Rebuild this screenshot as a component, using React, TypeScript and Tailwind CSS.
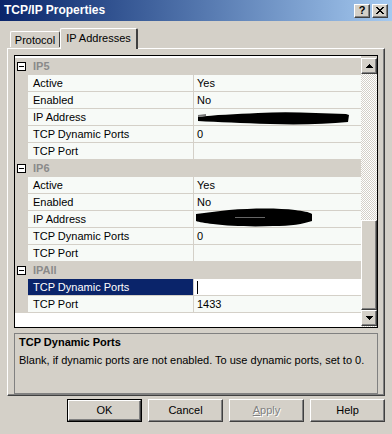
import React from 'react';

const raised =
  'border border-t-white border-l-white border-r-[#404040] border-b-[#404040] shadow-[inset_-1px_-1px_0_#808080]';

type Item = { name: string; value?: React.ReactNode; selected?: boolean };
type Section = { title: string; items: Item[] };

function BlobA() {
  return (
    <svg width="160" height="18" viewBox="0 0 160 18" className="absolute left-[2px] top-[2px]">
      <path d="M2,6 C18,4 40,3 62,2 C92,0 120,2 150,3 L153,4 L152,11 C130,13 104,14 74,13 C46,12 22,11 2,10 Z" fill="#000" />
      <path d="M2,4 L10,3 L10,5 L2,6 Z" fill="#777" />
    </svg>
  );
}

function BlobB() {
  return (
    <svg width="124" height="20" viewBox="0 0 124 20" className="absolute left-[1px] top-[-3px]">
      <path d="M1,6 C12,5 22,3 34,2 C58,0 84,0 100,2 C108,3 114,4 117,6 L117,13 C108,16 96,18 78,18 C56,19 34,18 18,16 C10,15 4,14 1,13 Z" fill="#000" />
      <path d="M40,9 L70,9 L70,10 L40,10 Z" fill="#666" />
    </svg>
  );
}

const sections: Section[] = [
  {
    title: 'IP5',
    items: [
      { name: 'Active', value: 'Yes' },
      { name: 'Enabled', value: 'No' },
      { name: 'IP Address', value: <BlobA /> },
      { name: 'TCP Dynamic Ports', value: '0' },
      { name: 'TCP Port', value: '' },
    ],
  },
  {
    title: 'IP6',
    items: [
      { name: 'Active', value: 'Yes' },
      { name: 'Enabled', value: 'No' },
      { name: 'IP Address', value: <BlobB /> },
      { name: 'TCP Dynamic Ports', value: '0' },
      { name: 'TCP Port', value: '' },
    ],
  },
  {
    title: 'IPAll',
    items: [
      { name: 'TCP Dynamic Ports', value: <span className="block w-px h-[13px] bg-black" />, selected: true },
      { name: 'TCP Port', value: '1433' },
    ],
  },
];

function MinusBox() {
  return (
    <div className="w-[9px] h-[9px] border border-black bg-white flex items-center justify-center">
      <div className="w-[5px] h-px bg-black" />
    </div>
  );
}

function Arrow({ down }: { down?: boolean }) {
  return (
    <svg width="7" height="4" viewBox="0 0 7 4" shapeRendering="crispEdges">
      {down ? <path d="M0,0 H7 L3.5,4 Z" fill="#000" /> : <path d="M0,4 H7 L3.5,0 Z" fill="#000" />}
    </svg>
  );
}

function CloseGlyph() {
  const rows = ['11000011', '01100110', '00111100', '00011000', '00111100', '01100110', '11000011'];
  return (
    <svg width="8" height="7" viewBox="0 0 8 7" shapeRendering="crispEdges">
      {rows.map((r, y) =>
        r.split('').map((c, x) => (c === '1' ? <rect key={`${x}-${y}`} x={x} y={y} width="1" height="1" fill="#000" /> : null)),
      )}
    </svg>
  );
}

function DialogButton({ label, primary, disabled }: { label: React.ReactNode; primary?: boolean; disabled?: boolean }) {
  const face = (
    <div
      className={`w-full h-full bg-[#d4d0c8] flex items-center justify-center ${raised} ${
        disabled ? 'text-[#808080] [text-shadow:1px_1px_0_#ffffff]' : 'text-black'
      }`}
    >
      {label}
    </div>
  );
  return primary ? <div className="w-[75px] h-[23px] border border-black">{face}</div> : <div className="w-[75px] h-[23px]">{face}</div>;
}

export default function App() {
  return (
    <div className="w-[392px] h-[434px] bg-[#d4d0c8] overflow-hidden font-['Liberation_Sans',Arial,sans-serif] text-[11px] leading-[13px] text-black">
      {/* Title bar */}
      <div className="h-[21px] flex items-center justify-between bg-gradient-to-r from-[#0a246a] to-[#a6caf0] pl-[4px] pr-[4px]">
        <span className="text-white font-bold text-[12px]">TCP/IP Properties</span>
        <div className="flex gap-[2px]">
          <div className={`w-[16px] h-[14px] bg-[#d4d0c8] flex items-center justify-center font-bold text-[11px] leading-[11px] ${raised}`}>?</div>
          <div className={`w-[16px] h-[14px] bg-[#d4d0c8] flex items-center justify-center ${raised}`}>
            <CloseGlyph />
          </div>
        </div>
      </div>

      {/* Tabs */}
      <div className="ml-[7px] w-[378px]">
        <div className="h-[27px] flex items-end pl-[3px] relative z-10">
          <div className="w-[50px] h-[16px] mb-px border-t border-l border-white border-r border-r-[#404040] rounded-t-[2px] flex items-center justify-center pt-px">
            Protocol
          </div>
          <div className="w-[78px] h-[21px] -mb-px bg-[#d4d0c8] border-t border-l border-white border-r-2 border-r-[#404040] rounded-t-[2px] flex items-start justify-center pt-[3px]">
            IP Addresses
          </div>
        </div>

        {/* Tab panel */}
        <div className="h-[348px] border-t border-l border-white border-r border-b border-r-[#404040] border-b-[#404040] shadow-[inset_-1px_-1px_0_#808080] pl-[6px] pr-[5px] pt-[6px]">
          {/* Property grid */}
          <div className="w-[364px] h-[273px] border border-black bg-white flex">
            <div className="w-[346px] pt-[2px]">
              {sections.map(sec => (
                <div key={sec.title}>
                  <div className="h-[17px] bg-[#d4d0c8] flex items-center pl-[2px]">
                    <MinusBox />
                    <span className="ml-[7px] font-bold text-[#8a8a8a]">{sec.title}</span>
                  </div>
                  {sec.items.map((it, i) => (
                    <div key={i} className="h-[17px] flex">
                      <div className="w-[13px] shrink-0 bg-[#d4d0c8]" />
                      <div
                        className={`w-[165px] shrink-0 border-b border-[#d4d0c8] pl-[5px] flex items-center ${
                          it.selected ? 'bg-[#0a246a] text-white' : 'bg-[#f7faf7]'
                        }`}
                      >
                        {it.name}
                      </div>
                      <div className="w-px shrink-0 bg-[#d4d0c8]" />
                      <div className={`relative flex-1 border-b border-[#d4d0c8] pl-[3px] flex items-center ${it.selected ? 'bg-white' : 'bg-[#f7faf7]'}`}>
                        {it.value}
                      </div>
                    </div>
                  ))}
                </div>
              ))}
            </div>
            {/* Scrollbar */}
            <div className="w-[16px] flex flex-col bg-[repeating-conic-gradient(#d4d0c8_0%_25%,#ffffff_0%_50%)] bg-[length:2px_2px]">
              <div className="h-[2px] bg-[#d4d0c8]" />
              <div className={`h-[16px] bg-[#d4d0c8] flex items-center justify-center ${raised}`}>
                <Arrow />
              </div>
              <div className="h-[146px]" />
              <div className={`h-[90px] bg-[#d4d0c8] ${raised}`} />
              <div className={`h-[16px] bg-[#d4d0c8] flex items-center justify-center ${raised}`}>
                <Arrow down />
              </div>
            </div>
          </div>

          {/* Description */}
          <div className="mt-[5px] w-[364px] h-[61px] border border-[#808080] pl-[4px] pt-[2px]">
            <div className="font-bold">TCP Dynamic Ports</div>
            <div className="mt-[5px]">Blank, if dynamic ports are not enabled. To use dynamic ports, set to 0.</div>
          </div>
        </div>
      </div>

      {/* Buttons */}
      <div className="mt-[3px] flex justify-end gap-[6px] pr-[7px]">
        <DialogButton label="OK" primary />
        <DialogButton label="Cancel" />
        <DialogButton
          label={
            <span>
              <span className="underline">A</span>pply
            </span>
          }
          disabled
        />
        <DialogButton label="Help" />
      </div>
    </div>
  );
}
